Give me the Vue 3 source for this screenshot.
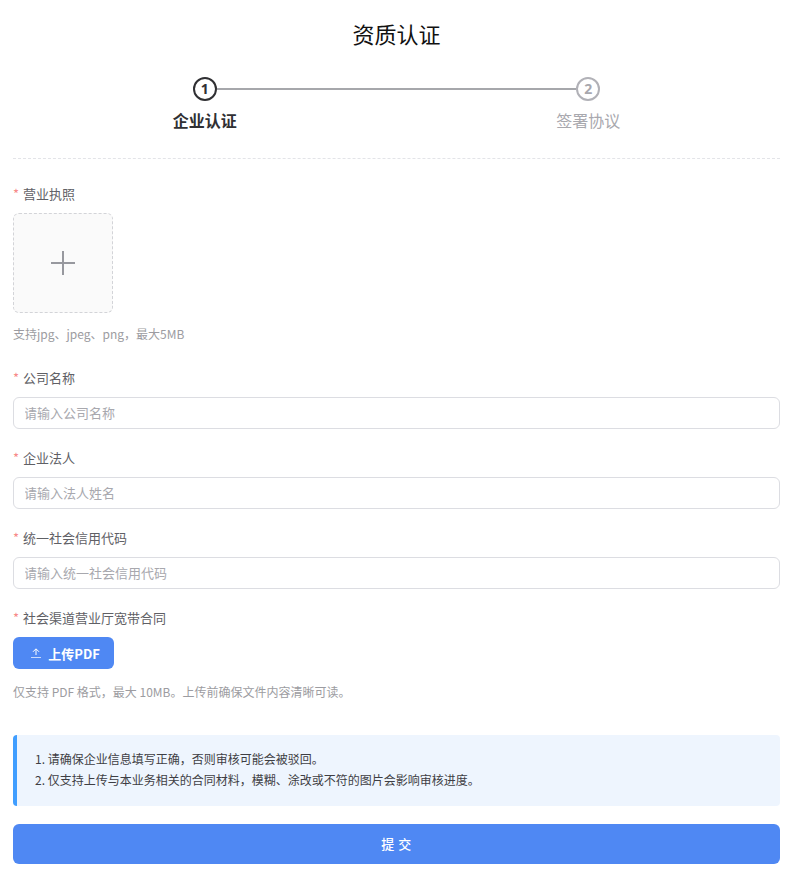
<script setup>
const fields = [
  { label: '公司名称', placeholder: '请输入公司名称' },
  { label: '企业法人', placeholder: '请输入法人姓名' },
  { label: '统一社会信用代码', placeholder: '请输入统一社会信用代码' },
]
</script>

<template>
  <div class="page">
    <h1 class="title">资质认证</h1>
    <div class="steps">
      <div class="step active">
        <div class="dot">1</div>
        <div class="step-label">企业认证</div>
      </div>
      <div class="step">
        <div class="dot">2</div>
        <div class="step-label">签署协议</div>
      </div>
    </div>
    <div class="divider"></div>

    <div class="field upload-field">
      <label class="label"><span class="star">*</span>营业执照</label>
      <div class="upload">
        <svg width="24" height="24" viewBox="0 0 24 24" fill="none" stroke="#97989e" stroke-width="2">
          <path d="M12 0v24M0 12h24" />
        </svg>
      </div>
      <div class="hint">支持jpg、jpeg、png，最大5MB</div>
    </div>

    <div v-for="f in fields" :key="f.label" class="field">
      <label class="label"><span class="star">*</span>{{ f.label }}</label>
      <input class="input" :placeholder="f.placeholder" />
    </div>

    <div class="field pdf-field">
      <label class="label"><span class="star">*</span>社会渠道营业厅宽带合同</label>
      <button class="pdf-btn" type="button">
        <svg width="12" height="12" viewBox="0 0 12 12" fill="none" stroke="#fff" stroke-width="1">
          <path d="M6 8V2M3 4.8 6 1.8l3 3" />
          <path d="M1 10.5h10" stroke-opacity="0.7" />
        </svg>
        <span>上传PDF</span>
      </button>
      <div class="hint pdf-hint">仅支持 PDF 格式，最大 10MB。上传前确保文件内容清晰可读。</div>
    </div>

    <div class="notice">
      <p>1. 请确保企业信息填写正确，否则审核可能会被驳回。</p>
      <p>2. 仅支持上传与本业务相关的合同材料，模糊、涂改或不符的图片会影响审核进度。</p>
    </div>

    <button class="submit" type="button">提 交</button>
  </div>
</template>

<style scoped>
.page {
  box-sizing: border-box;
  width: 796px;
  height: 874px;
  padding: 0 16px 0 13px;
  background: #fff;
  font-family: "Noto Sans CJK SC", "Noto Sans", sans-serif;
  color: #4e4e52;
  overflow: hidden;
}
.title {
  margin: 0;
  padding-top: 17px;
  height: 32px;
  line-height: 32px;
  font-size: 22px;
  font-weight: 400;
  text-align: center;
  color: #111;
}
.steps {
  display: flex;
  margin-top: 28px;
}
.step {
  position: relative;
  flex: 1;
  display: flex;
  flex-direction: column;
  align-items: center;
}
.step.active::after {
  content: "";
  position: absolute;
  top: 11px;
  left: calc(50% + 12px);
  width: calc(100% - 24px);
  height: 2px;
  background: #a6a7ab;
}
.dot {
  box-sizing: border-box;
  width: 24px;
  height: 24px;
  border: 2px solid #b1b1b7;
  border-radius: 50%;
  display: flex;
  align-items: center;
  justify-content: center;
  font-size: 14px;
  font-weight: 700;
  line-height: 1;
  color: #a8a8ae;
  font-family: "Open Sans", sans-serif;
}
.active .dot {
  border-color: #303033;
  color: #303033;
}
.step-label {
  margin-top: 7px;
  height: 24px;
  line-height: 24px;
  font-size: 16px;
  color: #a8a8ae;
}
.active .step-label {
  font-weight: 700;
  color: #303033;
}
.divider {
  margin-top: 26px;
  border-top: 1px dashed #e3e4e8;
}
.field {
  margin-top: 25px;
}
.field + .field {
  margin-top: 19px;
}
.upload-field {
  margin-top: 25px;
  padding-bottom: 6px;
}
.label {
  display: block;
  height: 20px;
  line-height: 20px;
  font-size: 13px;
  color: #606065;
}
.star {
  color: #f78989;
  margin-right: 4px;
}
.upload {
  box-sizing: border-box;
  width: 100px;
  height: 100px;
  margin-top: 9px;
  border: 1px dashed #d3d4d8;
  border-radius: 6px;
  background: #fafafa;
  display: flex;
  align-items: center;
  justify-content: center;
}
.hint {
  margin-top: 12px;
  height: 18px;
  line-height: 18px;
  font-size: 12px;
  color: #9c9ca1;
}
.input {
  display: block;
  box-sizing: border-box;
  width: 100%;
  height: 32px;
  margin-top: 9px;
  padding: 0 11px 2px 11px;
  border: 1px solid #dcdde2;
  border-radius: 6px;
  outline: none;
  background: #fff;
  font-family: inherit;
  font-size: 13px;
  text-indent: -1px;
}
.input::placeholder {
  color: #a8a8ae;
  opacity: 1;
}
.pdf-btn {
  width: 101px;
  height: 32px;
  margin-top: 9px;
  padding: 0 0 0 3px;
  border: 0;
  border-radius: 6px;
  background: #4f88f3;
  color: #fff;
  font-family: inherit;
  font-size: 13px;
  font-weight: 700;
  display: flex;
  align-items: center;
  justify-content: center;
  gap: 6px;
}
.pdf-hint {
  margin-top: 14px;
}
.notice {
  box-sizing: border-box;
  height: 71px;
  margin-top: 34px;
  padding: 13px 18px;
  border-left: 4px solid #409eff;
  border-radius: 4px;
  background: #eef5fe;
  font-size: 12px;
  line-height: 21px;
  color: #3e3e44;
}
.notice p {
  margin: 0;
}
.submit {
  display: block;
  width: 100%;
  height: 40px;
  margin-top: 18px;
  padding: 0 0 2px;
  border: 0;
  border-radius: 6px;
  background: #4f88f3;
  color: #fff;
  font-family: inherit;
  font-size: 13px;
  font-weight: 500;
  letter-spacing: 0.5px;
}
</style>
